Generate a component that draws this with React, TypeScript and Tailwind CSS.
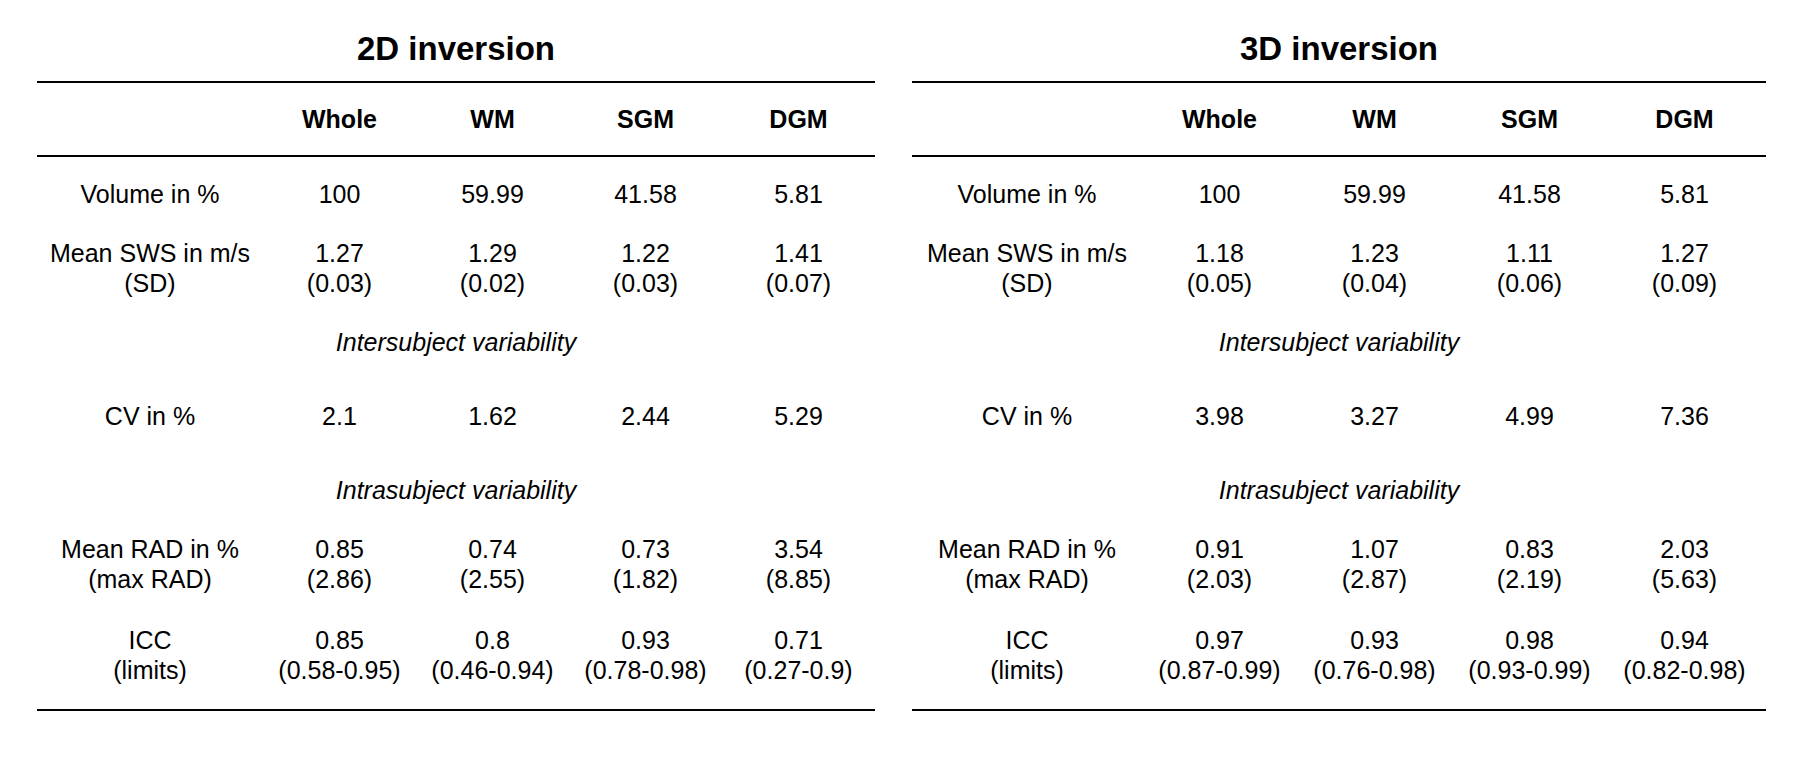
import React from "react"

type Row =
  | { kind: "data"; label: string[]; values: string[][]; tall?: boolean }
  | { kind: "section"; label: string }

interface TableSpec {
  title: string
  width: string
  cols: string
  rows: Row[]
}

const headers = ["Whole", "WM", "SGM", "DGM"]

const tables: TableSpec[] = [
  {
    title: "2D inversion",
    width: "w-[838px]",
    cols: "grid-cols-[226px_153px_153px_153px_153px]",
    rows: [
      { kind: "data", label: ["Volume in %"], values: [["100"], ["59.99"], ["41.58"], ["5.81"]] },
      {
        kind: "data",
        label: ["Mean SWS in m/s", "(SD)"],
        values: [
          ["1.27", "(0.03)"],
          ["1.29", "(0.02)"],
          ["1.22", "(0.03)"],
          ["1.41", "(0.07)"],
        ],
      },
      { kind: "section", label: "Intersubject variability" },
      { kind: "data", label: ["CV in %"], values: [["2.1"], ["1.62"], ["2.44"], ["5.29"]] },
      { kind: "section", label: "Intrasubject variability" },
      {
        kind: "data",
        label: ["Mean RAD in %", "(max RAD)"],
        values: [
          ["0.85", "(2.86)"],
          ["0.74", "(2.55)"],
          ["0.73", "(1.82)"],
          ["3.54", "(8.85)"],
        ],
      },
      {
        kind: "data",
        tall: true,
        label: ["ICC", "(limits)"],
        values: [
          ["0.85", "(0.58-0.95)"],
          ["0.8", "(0.46-0.94)"],
          ["0.93", "(0.78-0.98)"],
          ["0.71", "(0.27-0.9)"],
        ],
      },
    ],
  },
  {
    title: "3D inversion",
    width: "w-[854px]",
    cols: "grid-cols-[230px_155px_155px_155px_155px]",
    rows: [
      { kind: "data", label: ["Volume in %"], values: [["100"], ["59.99"], ["41.58"], ["5.81"]] },
      {
        kind: "data",
        label: ["Mean SWS in m/s", "(SD)"],
        values: [
          ["1.18", "(0.05)"],
          ["1.23", "(0.04)"],
          ["1.11", "(0.06)"],
          ["1.27", "(0.09)"],
        ],
      },
      { kind: "section", label: "Intersubject variability" },
      { kind: "data", label: ["CV in %"], values: [["3.98"], ["3.27"], ["4.99"], ["7.36"]] },
      { kind: "section", label: "Intrasubject variability" },
      {
        kind: "data",
        label: ["Mean RAD in %", "(max RAD)"],
        values: [
          ["0.91", "(2.03)"],
          ["1.07", "(2.87)"],
          ["0.83", "(2.19)"],
          ["2.03", "(5.63)"],
        ],
      },
      {
        kind: "data",
        tall: true,
        label: ["ICC", "(limits)"],
        values: [
          ["0.97", "(0.87-0.99)"],
          ["0.93", "(0.76-0.98)"],
          ["0.98", "(0.93-0.99)"],
          ["0.94", "(0.82-0.98)"],
        ],
      },
    ],
  },
]

function Cell({ lines }: { lines: string[] }) {
  return (
    <div className="flex flex-col items-center justify-center text-center">
      {lines.map((l) => (
        <span key={l} className="block whitespace-nowrap">
          {l}
        </span>
      ))}
    </div>
  )
}

function ResultsTable({ spec }: { spec: TableSpec }) {
  return (
    <div className={spec.width}>
      {/* Title */}
      <div className="h-[81px] pt-[16px] flex items-center justify-center text-[33px] leading-[38px] font-bold">
        {spec.title}
      </div>
      <div className="border-t-2 border-black" />

      {/* Header */}
      <div className={`grid ${spec.cols} h-[72px] items-center font-bold`}>
        <span />
        {headers.map((h) => (
          <span key={h} className="text-center">
            {h}
          </span>
        ))}
      </div>
      <div className="border-t-2 border-black" />

      {/* Body */}
      {spec.rows.map((row, idx) =>
        row.kind === "section" ? (
          <div key={idx} className="h-[74px] flex items-center justify-center italic">
            {row.label}
          </div>
        ) : (
          <div
            key={idx}
            className={`grid ${spec.cols} items-center ${row.tall ? "h-[108px]" : "h-[74px]"}`}
          >
            <Cell lines={row.label} />
            {row.values.map((v, i) => (
              <Cell key={i} lines={v} />
            ))}
          </div>
        )
      )}
      <div className="border-t-2 border-black" />
    </div>
  )
}

export default function App() {
  return (
    <div
      className="w-[1802px] h-[757px] bg-white text-black flex gap-[37px] pl-[37px] text-[25px] leading-[30px]"
      style={{ fontFamily: '"Liberation Sans", Arial, sans-serif' }}
    >
      {tables.map((t) => (
        <ResultsTable key={t.title} spec={t} />
      ))}
    </div>
  )
}
